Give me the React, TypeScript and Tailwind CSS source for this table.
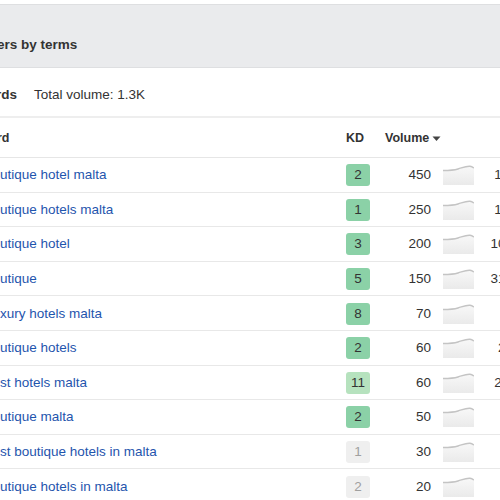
import React from "react";

const rows = [
  { kw: "utique hotel malta", kd: 2, vol: 450, extra: "1.1" },
  { kw: "utique hotels malta", kd: 1, vol: 250, extra: "1.1" },
  { kw: "utique hotel", kd: 3, vol: 200, extra: "100" },
  { kw: "utique", kd: 5, vol: 150, extra: "310" },
  { kw: "xury hotels malta", kd: 8, vol: 70, extra: "9" },
  { kw: "utique hotels", kd: 2, vol: 60, extra: "20" },
  { kw: "st hotels malta", kd: 11, vol: 60, extra: "2.3" },
  { kw: "utique malta", kd: 2, vol: 50, extra: "9" },
  { kw: "st boutique hotels in malta", kd: 1, vol: 30, extra: "4" },
  { kw: "utique hotels in malta", kd: 2, vol: 20, extra: "8" },
];

const badgeClass = (kd: number, vol: number) => {
  if (vol < 40) return "bg-[#efefef] text-[#a0a0a0]";
  if (kd > 10) return "bg-[#b6e2be] text-[#333]";
  return "bg-[#8bd1a7] text-[#333]";
};

const Sparkline = () => (
  <svg width="31" height="20" viewBox="0 0 31 20">
    <defs>
      <linearGradient id="spark" x1="0" y1="0" x2="0" y2="1">
        <stop offset="0" stopColor="#f8f8f8" />
        <stop offset="1" stopColor="#eaeaea" />
      </linearGradient>
    </defs>
    <path
      d="M0,5.5 C6,5.5 10,5.5 15,4 C20,2.5 23,1 27,1.3 C29,1.5 30,2.3 31,3 L31,20 L0,20 Z"
      fill="url(#spark)"
    />
    <path
      d="M0,5.5 C6,5.5 10,5.5 15,4 C20,2.5 23,1 27,1.3 C29,1.5 30,2.3 31,3"
      fill="none"
      stroke="#c4c4c4"
      strokeWidth="1.4"
    />
  </svg>
);

export default function App() {
  return (
    <div className="w-[500px] h-[500px] overflow-hidden bg-white font-['Liberation_Sans',Arial,sans-serif] text-[13.5px] text-[#333]">
      <div className="pt-[4px]">
        <div className="border-t border-b border-[#dedfe1] bg-[#eaebed] pt-[31px] pb-[14px] leading-[17px] font-bold whitespace-nowrap">
          <span className="-ml-[3px]">ers by terms</span>
        </div>
      </div>

      <div className="h-[50px] pt-[6px] flex items-center border-b-2 border-[#eeeeee] whitespace-nowrap">
        <span className="font-bold -ml-[4px] w-[38px] shrink-0">rds</span>
        <span>Total volume: 1.3K</span>
      </div>

      <div className="flex h-[40px] pt-[1px] items-center border-b border-[#e6e6e6] text-[12.5px] font-bold whitespace-nowrap">
        <div className="w-[346px] shrink-0 -ml-[3px]">
          <span>rd</span>
        </div>
        <div className="w-[39px] shrink-0 ml-[3px]">KD</div>
        <div className="flex items-center shrink-0">
          Volume
          <svg width="9" height="6" viewBox="0 0 9 6" className="ml-[3px] mt-[2px]">
            <path d="M0.5,0.5 L8.5,0.5 L4.5,5 Z" fill="#444" />
          </svg>
        </div>
      </div>

      {rows.map((row, i) => (
        <div
          key={i}
          className="flex h-[34.6px] pt-[1px] items-center border-b border-[#e8e8e8] whitespace-nowrap"
        >
          <div className="w-[346px] shrink-0 text-[#1f55ad]">{row.kw}</div>
          <div className="w-[39px] shrink-0">
            <div
              className={`w-[24px] h-[22px] rounded-[3px] flex items-center justify-center ${badgeClass(
                row.kd,
                row.vol
              )}`}
            >
              {row.kd}
            </div>
          </div>
          <div className="w-[46px] shrink-0 text-right">{row.vol}</div>
          <div className="w-[47px] shrink-0 pl-[12px] flex items-center">
            <Sparkline />
          </div>
          <div className="w-[35px] shrink-0 text-right">{row.extra}</div>
        </div>
      ))}
    </div>
  );
}
